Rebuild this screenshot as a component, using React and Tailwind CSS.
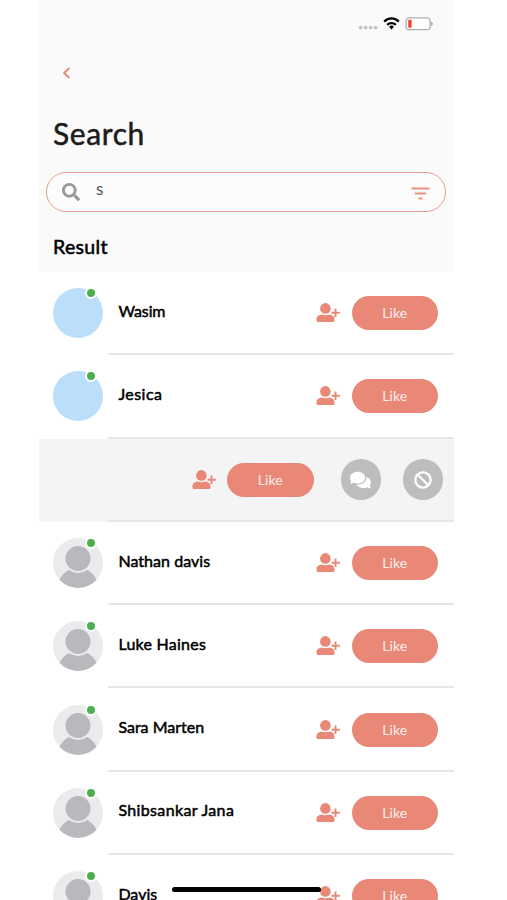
import { FaSearch, FaComments, FaBan } from 'react-icons/fa';

const people = [
  { id: 1, name: 'Wasim', photo: true, tracking: 'tracking-[-0.1px]' },
  { id: 2, name: 'Jesica', photo: true, tracking: 'tracking-[0.45px]' },
  { id: 3, swiped: true },
  { id: 4, name: 'Nathan davis', tracking: 'tracking-[0.05px]' },
  { id: 5, name: 'Luke Haines', tracking: 'tracking-[0.25px]' },
  { id: 6, name: 'Sara Marten', tracking: 'tracking-[0px]' },
  { id: 7, name: 'Shibsankar Jana', tracking: 'tracking-[0.35px]' },
  { id: 8, name: 'Davis', tracking: 'tracking-[0px]' },
];

const StatusBar = () => (
  <svg className="block ml-[319px] mt-[16px] w-[76px] h-[15px]" viewBox="0 0 76 15">
    <g fill="#c4c4c4">
      <circle cx="2.6" cy="11.6" r="1.9" />
      <circle cx="7.6" cy="11.6" r="1.9" />
      <circle cx="12.6" cy="11.6" r="1.9" />
      <circle cx="17.6" cy="11.6" r="1.9" />
    </g>
    <g fill="none" stroke="#000" strokeWidth="2.3">
      <path d="M26.2 5.6a10 10 0 0 1 14.6 0" />
      <path d="M29.2 8.9a6 6 0 0 1 8.6 0" />
    </g>
    <path d="M33.5 13.4l-2.4-2.6a3.4 3.4 0 0 1 4.8 0z" fill="#000" />
    <rect x="48.1" y="1.8" width="24" height="11.8" rx="3.2" fill="#fff" stroke="#b0b0b0" strokeWidth="1.3" />
    <rect x="50.2" y="3.7" width="3.5" height="8" rx="0.8" fill="#f5443a" />
    <path d="M73.4 5.4q2.6 2.3 0 4.6z" fill="#888" />
  </svg>
);

const PersonAdd = () => (
  <svg className="w-[24px] h-[20px] shrink-0" viewBox="0 0 24 20" fill="#e98877">
    <circle cx="9.4" cy="5.4" r="5.3" />
    <path d="M0.5 17.4v-1c0-3 2.3-4.4 5-4.8q4 1.4 8 0c2.7 0.4 5 1.8 5 4.8v1a1.5 1.5 0 0 1-1.5 1.5H2a1.5 1.5 0 0 1-1.5-1.5z" />
    <path d="M19.5 5.6v8.4M15.5 9.8h8.3" stroke="#e98877" strokeWidth="1.9" />
  </svg>
);

const LikeButton = () => (
  <button className="ml-[11.5px] w-[86.5px] h-[34px] shrink-0 rounded-full bg-[#e98877] text-[#fdeeea] text-[14px] leading-[32px] tracking-[0.1px]">
    Like
  </button>
);

const Avatar = ({ photo }) => (
  <div className="relative w-[50px] h-[50px] shrink-0">
    {photo ? (
      <div className="w-full h-full rounded-full bg-[#bbdefa]" />
    ) : (
      <svg className="w-full h-full" viewBox="0 0 50 50">
        <circle cx="25" cy="25" r="25" fill="#e9ebec" />
        <path d="M6.5 41.7Q9.6 35.5 15.5 32q9.5 6 19 0Q40.5 35.5 43.5 41.7A25 25 0 0 1 6.5 41.7z" fill="#b7b9bc" />
        <circle cx="25" cy="20.5" r="13.8" fill="#e9ebec" />
        <circle cx="25" cy="20.5" r="12.5" fill="#b7b9bc" />
      </svg>
    )}
    <span className="absolute left-[32px] -top-px w-[12px] h-[12px] rounded-full bg-[#4caf50] border-2 border-white" />
  </div>
);

const Divider = () => (
  <span className="absolute left-[69px] right-0 bottom-0 h-[2px] bg-[#e6e6e6]" />
);

const PersonRow = ({ person }) => (
  <div className="relative flex items-center h-[83.3px] pl-[14.4px] pr-[16px] pb-px">
    <Avatar photo={person.photo} />
    <span className={`ml-[15px] -mt-[5px] flex-1 text-[16px] leading-[20px] text-black [-webkit-text-stroke:0.5px_black] ${person.tracking}`}>
      {person.name}
    </span>
    <PersonAdd />
    <LikeButton />
    <Divider />
  </div>
);

const SwipedRow = () => (
  <div className="relative flex items-center justify-end h-[83.3px] pr-[11px] pb-px bg-[#f4f4f4]">
    <PersonAdd />
    <LikeButton />
    <button className="ml-[27px] w-[40.5px] h-[40.5px] flex items-center justify-center rounded-full bg-[#bdbdbd] text-white">
      <FaComments className="w-[21px] h-[20px]" />
    </button>
    <button className="ml-[21.5px] w-[40.5px] h-[40.5px] flex items-center justify-center rounded-full bg-[#bdbdbd] text-white">
      <FaBan className="w-[18px] h-[18px]" />
    </button>
    <Divider />
  </div>
);

const App = () => {
  return (
    <div className="relative w-[507px] h-[900px] overflow-hidden bg-white font-['Lato',sans-serif]">
      <div className="ml-[39px] w-[415px]">
        <header className="h-[272px] bg-[#fafafa] flow-root">
          <StatusBar />
          <svg className="block mt-[36px] ml-[23px] w-[9px] h-[12px]" viewBox="0 0 9 12" fill="none" stroke="#e98877" strokeWidth="1.9">
            <path d="M7.3 1L2.2 6l5.1 5" />
          </svg>
          <h1 className="mt-[36px] ml-[14px] h-[36px] text-[30px] leading-[36px] tracking-[0.6px] text-[#1c1c1c] [-webkit-text-stroke:0.5px_#1c1c1c]">
            Search
          </h1>
          <div className="mt-[21px] ml-[7px] w-[400px] h-[40px] flex items-center rounded-full border border-[#eb9c8d] bg-[#fcfcfc] pl-[15px] pr-[15px]">
            <FaSearch className="w-[18px] h-[18px] text-[#999]" />
            <span className="ml-[16px] -mt-[6px] flex-1 text-[17px] leading-[20px] text-[#555]">s</span>
            <svg className="w-[19px] h-[13px] mt-[2px]" viewBox="0 0 19 13" stroke="#eb8f7f" strokeWidth="1.8">
              <path d="M0.5 1.5h18M3.7 6.5h11.6M7.5 11.5h4" />
            </svg>
          </div>
          <h2 className="mt-[23px] ml-[14px] text-[19.5px] leading-[24px] tracking-[0.35px] text-black [-webkit-text-stroke:0.55px_black]">
            Result
          </h2>
        </header>
        {people.map((person) =>
          person.swiped ? <SwipedRow key={person.id} /> : <PersonRow key={person.id} person={person} />
        )}
      </div>
      {/* home indicator */}
      <div className="absolute left-[172px] top-[887px] w-[149px] h-[5px] rounded-full bg-black" />
    </div>
  );
};

export default App;
